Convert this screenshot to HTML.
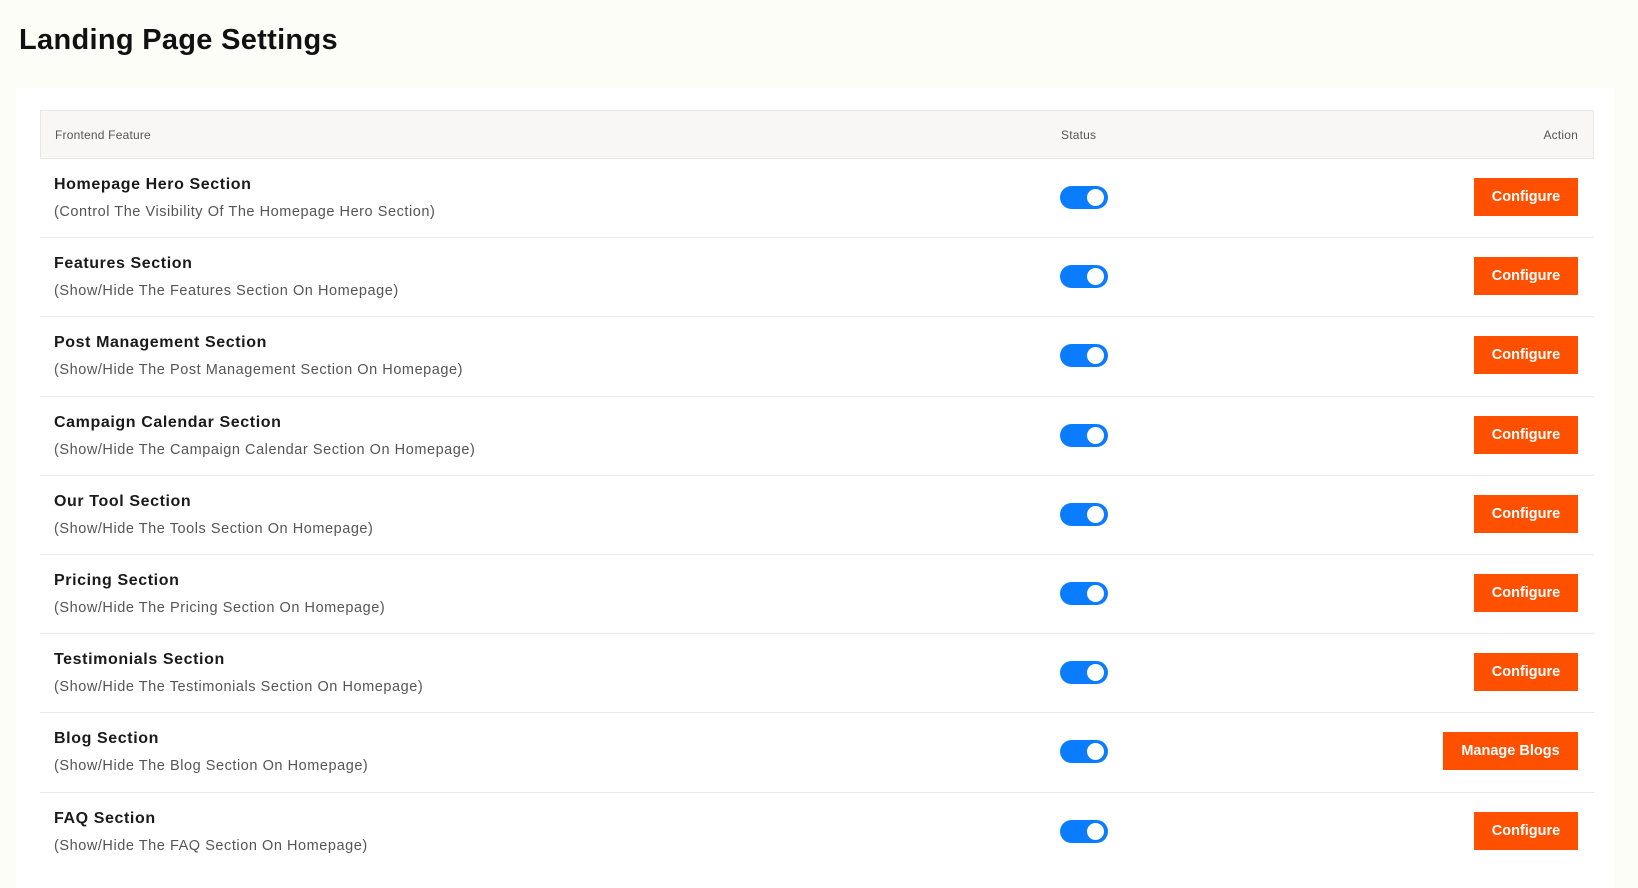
<!DOCTYPE html>
<html><head><meta charset="utf-8"><style>
*{margin:0;padding:0;box-sizing:border-box}
body{width:1638px;height:855px;overflow:hidden;background:#fdfdf8;font-family:"Liberation Sans",sans-serif;position:relative}
h1{position:absolute;left:19px;top:24px;font-size:29px;font-weight:bold;color:#111;letter-spacing:0.3px}
.card{position:absolute;left:16px;top:88px;width:1598px;height:800px;background:#fff}
.table{position:absolute;left:40px;top:110px;width:1554px}
.head{height:49px;background:#f8f7f5;border:1px solid #e8e8e8;position:relative;font-size:12px;color:#555}
.head span{position:absolute;top:17px;letter-spacing:0.2px}
.row{height:79.2px;border-bottom:1px solid #e9e9e9;position:relative}
.t{position:absolute;left:14px;top:17px;font-size:16px;font-weight:bold;color:#1a1a1a;letter-spacing:0.6px}
.s{position:absolute;left:14px;top:45px;font-size:14.5px;color:#555;letter-spacing:0.55px}
.tg{position:absolute;left:1020px;top:27px;width:48px;height:23px;border-radius:12px;background:#0a7cff}
.tg:after{content:"";position:absolute;right:4px;top:3px;width:17px;height:17px;border-radius:50%;background:#fff}
.b{position:absolute;right:16px;top:19px;height:38px;background:#ff5000;color:#fff;font-weight:bold;font-size:14.5px;line-height:39px;text-align:center;width:104px}
.b.w{width:135px}
</style></head><body>
<h1>Landing Page Settings</h1>
<div class="card"></div>
<div class="table">
<div class="head"><span style="left:14px">Frontend Feature</span><span style="left:1020px">Status</span><span style="right:15px">Action</span></div>
<div class="row"><div class="t">Homepage Hero Section</div><div class="s">(Control The Visibility Of The Homepage Hero Section)</div><div class="tg"></div><div class="b">Configure</div></div>
<div class="row"><div class="t">Features Section</div><div class="s">(Show/Hide The Features Section On Homepage)</div><div class="tg"></div><div class="b">Configure</div></div>
<div class="row"><div class="t">Post Management Section</div><div class="s">(Show/Hide The Post Management Section On Homepage)</div><div class="tg"></div><div class="b">Configure</div></div>
<div class="row"><div class="t">Campaign Calendar Section</div><div class="s">(Show/Hide The Campaign Calendar Section On Homepage)</div><div class="tg"></div><div class="b">Configure</div></div>
<div class="row"><div class="t">Our Tool Section</div><div class="s">(Show/Hide The Tools Section On Homepage)</div><div class="tg"></div><div class="b">Configure</div></div>
<div class="row"><div class="t">Pricing Section</div><div class="s">(Show/Hide The Pricing Section On Homepage)</div><div class="tg"></div><div class="b">Configure</div></div>
<div class="row"><div class="t">Testimonials Section</div><div class="s">(Show/Hide The Testimonials Section On Homepage)</div><div class="tg"></div><div class="b">Configure</div></div>
<div class="row"><div class="t">Blog Section</div><div class="s">(Show/Hide The Blog Section On Homepage)</div><div class="tg"></div><div class="b w">Manage Blogs</div></div>
<div class="row" style="border-bottom:none"><div class="t">FAQ Section</div><div class="s">(Show/Hide The FAQ Section On Homepage)</div><div class="tg"></div><div class="b">Configure</div></div>
</div>
</body></html>
